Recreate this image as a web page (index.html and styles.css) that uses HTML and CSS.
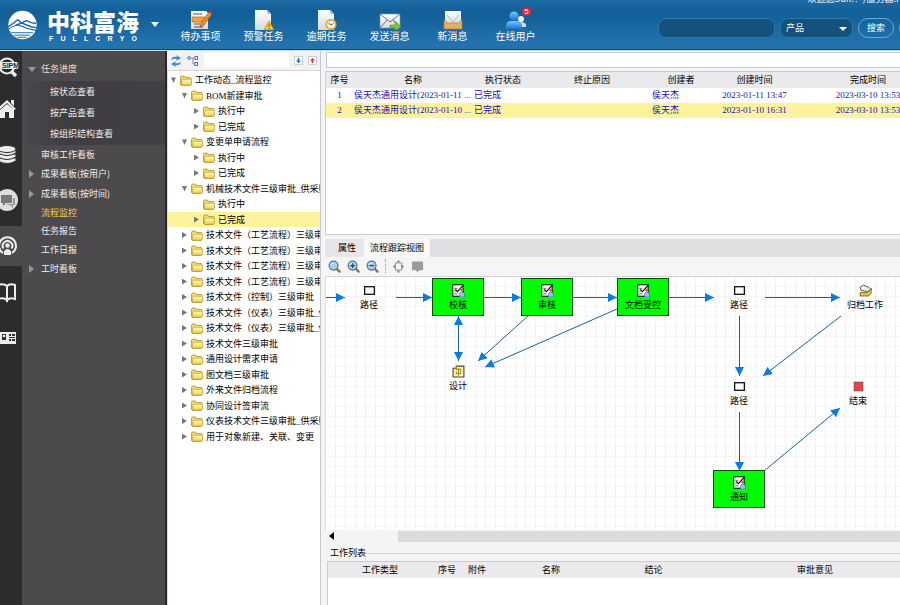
FILE: index.html
```html
<!DOCTYPE html>
<html lang="zh-CN">
<head>
<meta charset="utf-8">
<title>流程监控</title>
<link rel="stylesheet" href="styles.css">
</head>
<body>
<svg class="defs" aria-hidden="true">
  <defs>
    <linearGradient id="gold" x1="0" y1="0" x2="0" y2="1"><stop offset="0" stop-color="#fffbc4"/><stop offset="1" stop-color="#ecd04c"/></linearGradient>
    <linearGradient id="paper" x1="0" y1="0" x2="0" y2="1"><stop offset="0" stop-color="#ffffff"/><stop offset="1" stop-color="#d5dade"/></linearGradient>
    <linearGradient id="person" x1="0" y1="0" x2="0" y2="1"><stop offset="0" stop-color="#7cc6ff"/><stop offset="1" stop-color="#1274dd"/></linearGradient>
    <symbol id="folder" viewBox="0 0 12 11">
      <path d="M.5 9.500V2.500Q.5 1 2 1H4.500L5.500 2.500H10Q11 2.500 11 3.500V9Q11 10.500 9.500 10.500H1.500Z" fill="#f0da68" stroke="#a5851a" stroke-width=".7"/>
      <path d="M1.800 5.200Q2 4.300 2.900 4.300H11.500V9Q11.300 10.200 10.200 10.200H1.300Z" fill="url(#gold)" stroke="#b8962a" stroke-width=".6"/>
    </symbol>
    <symbol id="task" viewBox="0 0 12 12">
      <rect x=".7" y=".7" width="9.600" height="10.600" fill="#fff" stroke="#111"/>
      <path d="M2 4h3M2 6.500h2M2 9h3" stroke="#555" stroke-width=".8"/>
      <path d="M3 5l2 2 5-5.500" fill="none" stroke="#111" stroke-width="1.100"/>
      <circle cx="9" cy="5.500" r="1.400" fill="#e25a4b"/>
      <path d="M7 12V8.500Q9 6.500 11.500 8.500V12Z" fill="#9cc4f8" stroke="#3155a5" stroke-width=".5"/>
    </symbol>
    <symbol id="lens" viewBox="0 0 14 14">
      <path d="M9 9l3.500 3.500" stroke="#8d7334" stroke-width="2.400" stroke-linecap="round"/>
      <circle cx="6" cy="6" r="4.800" fill="#a9cfe8" stroke="#53748f" stroke-width="1.300"/>
      <path d="M3 5.500Q4 3 6.500 3" stroke="#e5f6ff" fill="none"/>
    </symbol>
  </defs>
</svg>

<header class="top">
  <a class="brand" href="#">
    <svg class="brand-mark" viewBox="0 0 30 30" aria-hidden="true">
      <circle cx="15" cy="15" r="14.700" fill="#fff"/>
      <path d="M0 17Q6 13 10 9.500Q13 13 19 15Q24 17 30 18M8 15Q13 14 19 10.500Q24 13 29 13.500" fill="none" stroke="#1c69a5" stroke-width="1.500"/>
      <path d="M1 19Q7 15 11 15Q19 19 29 20.500" fill="none" stroke="#1c69a5" stroke-width="1.200"/>
      <path d="M3 23h23M6 25.500h17M10 27.700h9" stroke="#1c69a5" stroke-width="1"/>
    </svg>
    <span class="brand-text">
      <strong>中科富海</strong>
      <span class="brand-latin"><span>F</span><span>U</span><span>L</span><span>L</span><span>C</span><span>R</span><span>Y</span><span>O</span></span>
    </span>
    <span class="caret"></span>
  </a>
  <nav class="shortcuts">
    <a href="#"><svg viewBox="0 0 22 20"><path d="M1 1h15l2 2v16H1z" fill="url(#paper)"/><path d="M3 4h9M4 14h6M4 17h9" stroke="#555" stroke-width="1.200"/><path d="M2 7h12l4 2-3 3H2z" fill="#f3a440" stroke="#b96e18" stroke-width=".7"/><path d="M11 13L19 2l3 2-8 11-4 2z" fill="#f08b25" stroke="#8b4a18" stroke-width=".6"/><path d="M19 2l1-1.500 3 2-1 2z" fill="#d9342b"/></svg><span>待办事项</span></a>
    <a href="#"><svg viewBox="0 0 22 20"><path d="M2 0h12l4 4v16H2z" fill="url(#paper)"/><path d="M14 0v4h4" fill="#bec5ca"/><path d="M16 11l5 9H11z" fill="#f7c82e" stroke="#c28b10" stroke-width=".8"/><path d="M16 14v3M16 18v1" stroke="#885b08"/></svg><span>预警任务</span></a>
    <a href="#"><svg viewBox="0 0 22 20"><path d="M2 0h12l4 4v16H2z" fill="url(#paper)"/><path d="M14 0v4h4" fill="#bec5ca"/><circle cx="15" cy="14.500" r="4.700" fill="#fff" stroke="#e7a12d" stroke-width="1.700"/><path d="M12.500 13l2.500 2 2.500-1.500" fill="none" stroke="#555"/></svg><span>逾期任务</span></a>
    <a href="#"><svg viewBox="0 0 22 20"><path d="M1 4h20v14H1z" fill="url(#paper)" stroke="#8b949b" stroke-width=".6"/><path d="M1 4l10 8L21 4M1 18l7-8M21 18l-7-8" fill="none" stroke="#697078"/><path d="M11 15h5v-4l6 5.500-6 5V18h-5z" fill="#7cc42b" stroke="#528e16" stroke-width=".5"/></svg><span>发送消息</span></a>
    <a href="#"><svg viewBox="0 0 22 20"><path d="M3 1h16v14H3z" fill="url(#paper)"/><path d="M5 5l6 7 6-7" fill="none" stroke="#a5b8c5"/><path d="M2 10l4 3h10l4-3v9H2z" fill="#e6ad65" stroke="#ba7a34" stroke-width=".7"/></svg><span>新消息</span></a>
    <a href="#"><svg viewBox="0 0 22 20"><circle cx="16" cy="9" r="3" fill="#eef4f8"/><path d="M12 17v-3q4-4 9 0v3z" fill="#d3dde5"/><circle cx="9" cy="6" r="4.600" fill="url(#person)"/><path d="M1 19v-4q1-4 5-4h6q4 0 5 4v4z" fill="url(#person)"/></svg><span>在线用户</span><b class="badge">5</b></a>
  </nav>
  <p class="welcome">欢迎您Sun!！/服务器:PLM</p>
  <form class="search">
    <input type="text" aria-label="关键字">
    <span class="picker"><select aria-label="类型"><option>产品</option></select></span>
    <button type="button">搜索</button>
    <button type="button" aria-label="高级搜索"></button>
  </form>
</header>

<main class="shell">
  <nav class="rail" aria-label="模块">
    <a href="#" class="first"><svg viewBox="0 0 20 22"><circle cx="7" cy="9" r="7.500" fill="none" stroke="#ececec" stroke-width="2"/><path d="M11 14l5 5" stroke="#ececec" stroke-width="3.500"/><rect x="0" y="5" width="19" height="7" rx="3" fill="#ececec"/><text x="2" y="11" class="rail-word">SIPM</text></svg></a>
    <a href="#"><svg viewBox="0 0 20 22"><path d="M-3 12L7 3l9 9-2 1-7-7-8 7zM11 3h3v6l-3-3zM0 13l7-6 7 6v8H9v-6H5v6H0z" fill="#ececec"/></svg></a>
    <a href="#"><svg viewBox="0 0 20 22"><g fill="#ececec" stroke="#2c2b2d" stroke-width="1"><path d="M-2 15v3q9 5 18 0v-3z"/><path d="M-2 11v3q9 5 18 0v-3z"/><path d="M-2 7v3q9 5 18 0V7z"/><ellipse cx="7" cy="6" rx="9" ry="3.500"/></g></svg></a>
    <a href="#"><svg viewBox="0 0 20 22"><circle cx="7" cy="11" r="11" fill="#dedede"/><path d="M1 6h11v8H6l-3 3v-3H1z" fill="#777"/><path d="M13 9h2v7h-2v3l-3-3H6l2-1h5z" fill="#999"/></svg></a>
    <a href="#" class="on"><svg viewBox="0 0 20 22"><g fill="none" stroke="#ececec" stroke-width="2"><path d="M3 18a8.500 8.500 0 1 1 9 0M3.500 13.500a4.800 4.800 0 1 1 8 0"/></g><circle cx="7.500" cy="10.500" r="2.300" fill="#ececec"/><path d="M4 20v-4q3.500-4 7 0v4z" fill="#ececec"/></svg></a>
    <a href="#"><svg viewBox="0 0 20 22"><path d="M-2 4q6-2 9 1v14q-3-3-9-1zM7 5q3-3 8-1v14q-5-2-8 1z" fill="none" stroke="#ececec" stroke-width="2"/></svg></a>
    <a href="#"><svg viewBox="0 0 20 22"><path d="M-2 5h18v12H-2z" fill="#ececec"/><path d="M2 7h4v6H2zM9 7h2v2H9zM12 7h3v2h-3zM9 10h6v1H9zM9 12h2v2H9zM12 12h3v2h-3zM0 15h5M8 15h6" fill="#2c2b2d"/><circle cx="4" cy="9" r="1.300" fill="#ececec"/></svg></a>
  </nav>

  <nav class="menu">
    <a href="#" class="parent open">任务进度</a>
    <div class="sub">
      <a href="#">按状态查看</a>
      <a href="#">按产品查看</a>
      <a href="#">按组织结构查看</a>
    </div>
    <a href="#">审核工作看板</a>
    <a href="#" class="parent">成果看板(按用户)</a>
    <a href="#" class="parent">成果看板(按时间)</a>
    <a href="#" class="minor current">流程监控</a>
    <a href="#" class="minor">任务报告</a>
    <a href="#">工作日报</a>
    <a href="#" class="parent">工时看板</a>
  </nav>

  <section class="tree-pane">
    <div class="tree-tools">
      <button type="button" aria-label="刷新"><svg viewBox="0 0 12 12"><path d="M1 5q1-4 6-3l-1-2 5 3-5 3 1-2q-3-1-6 1zM11 7q-1 4-6 3l1 2-5-3 5-3-1 2q3 1 6-1z" fill="#3f87cf"/></svg></button>
      <button type="button" aria-label="层级"><svg viewBox="0 0 12 12"><path d="M3 3h3M6 3v6h2M6 3h2" fill="none" stroke="#7d8db5"/><g fill="#fff" stroke="#5d6fa8"><circle cx="2" cy="3" r="1.400"/><rect x="8" y="1.500" width="2.500" height="3"/><rect x="8" y="7.500" width="2.500" height="3"/></g></svg></button>
      <input type="text" aria-label="筛选">
      <button type="button" class="step" aria-label="下一个"><svg viewBox="0 0 8 8"><path d="M3 1h2v3h2L4 7 1 4h2z" fill="#187f9c"/></svg></button>
      <button type="button" class="step" aria-label="上一个"><svg viewBox="0 0 8 8"><path d="M3 7h2V4h2L4 1 1 4h2z" fill="#d33d32"/></svg></button>
    </div>
    <ul class="tree">
      <li class="l0 open"><svg><use href="#folder"/></svg>工作动态_流程监控</li>
      <li class="l1 open"><svg><use href="#folder"/></svg>BOM新建审批</li>
      <li class="l2"><svg><use href="#folder"/></svg>执行中</li>
      <li class="l2"><svg><use href="#folder"/></svg>已完成</li>
      <li class="l1 open"><svg><use href="#folder"/></svg>变更单申请流程</li>
      <li class="l2"><svg><use href="#folder"/></svg>执行中</li>
      <li class="l2"><svg><use href="#folder"/></svg>已完成</li>
      <li class="l1 open"><svg><use href="#folder"/></svg>机械技术文件三级审批_供采购</li>
      <li class="l2 leaf"><svg><use href="#folder"/></svg>执行中</li>
      <li class="l2 picked"><svg><use href="#folder"/></svg>已完成</li>
      <li class="l1"><svg><use href="#folder"/></svg>技术文件（工艺流程）三级审批</li>
      <li class="l1"><svg><use href="#folder"/></svg>技术文件（工艺流程）三级审批</li>
      <li class="l1"><svg><use href="#folder"/></svg>技术文件（工艺流程）三级审批</li>
      <li class="l1"><svg><use href="#folder"/></svg>技术文件（工艺流程）三级审批</li>
      <li class="l1"><svg><use href="#folder"/></svg>技术文件（控制）三级审批</li>
      <li class="l1"><svg><use href="#folder"/></svg>技术文件（仪表）三级审批_供采购</li>
      <li class="l1"><svg><use href="#folder"/></svg>技术文件（仪表）三级审批_供采购</li>
      <li class="l1"><svg><use href="#folder"/></svg>技术文件三级审批</li>
      <li class="l1"><svg><use href="#folder"/></svg>通用设计需求申请</li>
      <li class="l1"><svg><use href="#folder"/></svg>图文档三级审批</li>
      <li class="l1"><svg><use href="#folder"/></svg>外来文件归档流程</li>
      <li class="l1"><svg><use href="#folder"/></svg>协同设计签审流</li>
      <li class="l1"><svg><use href="#folder"/></svg>仪表技术文件三级审批_供采购</li>
      <li class="l1"><svg><use href="#folder"/></svg>用于对象新建、关联、变更</li>
    </ul>
  </section>

  <section class="work">
    <div class="filter"><input type="text" aria-label="过滤"></div>
    <div class="list">
      <table class="flows">
        <colgroup><col class="w27"><col class="w120"><col class="w60"><col class="w118"><col class="w60"><col class="w87"><col class="w140"></colgroup>
        <thead><tr><th>序号</th><th>名称</th><th>执行状态</th><th>终止原因</th><th>创建者</th><th>创建时间</th><th>完成时间</th></tr></thead>
        <tbody>
          <tr><td class="mid">1</td><td>侯天杰通用设计(2023-01-11 ...</td><td>已完成</td><td></td><td>侯天杰</td><td class="mid">2023-01-11 13:47</td><td class="mid">2023-03-10 13:53</td></tr>
          <tr class="picked"><td class="mid">2</td><td>侯天杰通用设计(2023-01-10 ...</td><td>已完成</td><td></td><td>侯天杰</td><td class="mid">2023-01-10 16:31</td><td class="mid">2023-03-10 13:53</td></tr>
        </tbody>
      </table>
    </div>

    <div class="tabs"><button type="button">属性</button><button type="button" class="on">流程跟踪视图</button></div>
    <div class="tools">
      <button type="button" aria-label="缩放"><svg viewBox="0 0 14 14"><use href="#lens"/></svg></button>
      <button type="button" aria-label="放大"><svg viewBox="0 0 14 14"><use href="#lens"/><path d="M3.500 6h5M6 3.500v5" stroke="#234a77" stroke-width="1.400"/></svg></button>
      <button type="button" aria-label="缩小"><svg viewBox="0 0 14 14"><use href="#lens"/><path d="M3.500 6h5" stroke="#234a77" stroke-width="1.400"/></svg></button>
      <i class="split"></i>
      <button type="button" aria-label="适合窗口"><svg viewBox="0 0 14 14"><rect x="3.500" y="3" width="7" height="8" rx="1" fill="#fff6d8" stroke="#666f92"/><path d="M7 0l1.500 2h-3zM7 14l1.500-2h-3zM1 7l2-1.500v3zM13 7l-2-1.500v3z" fill="#5867a9"/></svg></button>
      <button type="button" aria-label="备注"><svg viewBox="0 0 14 14"><path d="M1 2.500q0-1 1-1h10q1 0 1 1V10q0 1-1 1H9l-2 2-2-2H2q-1 0-1-1z" fill="#9b9b9b"/></svg></button>
    </div>

    <div class="canvas">
      <svg class="links" width="576" height="252" aria-hidden="true">
        <defs><marker id="head" markerUnits="userSpaceOnUse" markerWidth="10" markerHeight="10" refX="9" refY="5" orient="auto-start-reverse"><path d="M0 .5L9 5 0 9.500z" fill="#0b7bdc"/></marker></defs>
        <g class="edge">
          <path d="M0 20.500H20"/><path d="M71 20.500H107"/><path d="M159 20.500H196"/><path d="M248 20.500H292"/><path d="M344 20.500H389"/><path d="M440 20.500H515"/>
          <path class="both" d="M133.500 39V84"/><path d="M203 39L153 84"/><path d="M292 32L160 90"/>
          <path d="M414.500 39V99"/><path d="M516 39L438 99"/><path d="M414.500 135V194"/><path d="M439 194L515 131"/>
        </g>
      </svg>
      <div class="node n1"><svg viewBox="0 0 12 12"><rect x="1.500" y="2.500" width="9" height="7" fill="#fff" stroke="#111" stroke-width="1.200"/></svg>路径</div>
      <div class="node go n2"><svg><use href="#task"/></svg>校核</div>
      <div class="node go n3"><svg><use href="#task"/></svg>审核</div>
      <div class="node go n4"><svg><use href="#task"/></svg>文档受控</div>
      <div class="node n5"><svg viewBox="0 0 12 12"><rect x="1.500" y="2.500" width="9" height="7" fill="#fff" stroke="#111" stroke-width="1.200"/></svg>路径</div>
      <div class="node n6"><svg viewBox="0 0 12 12"><path d="M1 8l7 0 4-4v3l-3 4H1z" fill="#ecd52f" stroke="#6c5c10" stroke-width=".8"/><path d="M1 3l3-2 5 2 2 2-3 2-6-1z" fill="#eee" stroke="#444" stroke-width=".8"/></svg>归档工作</div>
      <div class="node n7"><svg viewBox="0 0 12 12"><path d="M1 3h3V1h7v10H1z" fill="#fff3c4" stroke="#4b4533"/><path d="M4 1v3h4v4H4V6M6 3v7" fill="none" stroke="#b08a1d"/></svg>设计</div>
      <div class="node n8"><svg viewBox="0 0 12 12"><rect x="1.500" y="2.500" width="9" height="7" fill="#fff" stroke="#111" stroke-width="1.200"/></svg>路径</div>
      <div class="node n9"><svg viewBox="0 0 12 12"><rect x="2" y="2" width="8" height="8" fill="#e2454d" stroke="#9c3036" stroke-width=".8"/></svg>结束</div>
      <div class="node go n10"><svg><use href="#task"/></svg>通知</div>
    </div>
    <div class="hscroll"><i class="back"></i><i class="thumb"></i></div>

    <div class="jobs">
      <h2><span>工作列表</span></h2>
      <div class="jobs-body">
      <table>
        <colgroup><col class="w104"><col class="w30"><col class="w30"><col class="w118"><col class="w87"><col class="w236"></colgroup>
        <thead><tr><th>工作类型</th><th>序号</th><th>附件</th><th>名称</th><th>结论</th><th>审批意见</th></tr></thead>
      </table>
      </div>
    </div>
  </section>
</main>
</body>
</html>
```
FILE: styles.css
```css
* { box-sizing: border-box; }
html, body { height: 100%; }
body {
  margin: 0;
  display: flex;
  flex-direction: column;
  overflow: hidden;
  background: #fff;
  color: #000;
  font: 9px/16px "Liberation Serif", "Noto Sans CJK SC", serif;
}
a { color: inherit; text-decoration: none; }
button, input, select { font: inherit; color: inherit; margin: 0; padding: 0; border: 0; background: none; }
.defs { position: absolute; width: 0; height: 0; }

/* header */
.top {
  position: relative;
  flex: none;
  display: flex;
  align-items: center;
  height: 50px;
  overflow: hidden;
  color: #fff;
  background: linear-gradient(#1d6ba5, #125f97 25%, #2472ad 90%);
  border-bottom: 1px solid #0f4570;
  font-family: "Noto Sans CJK SC", sans-serif;
}
.brand { display: flex; align-items: center; flex: none; width: 169px; padding-left: 8px; }
.brand-mark { width: 29px; height: 30px; }
.brand-text { width: 92px; margin-left: 10px; }
.brand-text strong { display: block; font-size: 23px; line-height: 28px; font-weight: 900; white-space: nowrap; }
.brand-latin { display: flex; justify-content: space-between; padding: 0 2px; font: bold 7px/8px "Liberation Sans", sans-serif; }
.caret { margin-left: 12px; border: 4px solid transparent; border-top: 5px solid #fff; border-bottom: 0; }
.shortcuts { display: flex; flex: none; }
.shortcuts a {
  position: relative;
  display: flex;
  flex-direction: column;
  align-items: center;
  width: 63px;
  font-size: 10px;
  line-height: 12px;
  padding-top: 3px;
}
.shortcuts svg { width: 22px; height: 20px; }
.badge {
  position: absolute;
  top: 0;
  right: 16px;
  width: 9px;
  height: 9px;
  border-radius: 50%;
  background: #df2537;
  font: 8px/9px "Liberation Sans", sans-serif;
  text-align: center;
}
.welcome { position: absolute; right: -14px; top: -7px; margin: 0; font-size: 9px; line-height: 12px; white-space: nowrap; }
.search { display: flex; flex: none; gap: 5px; margin: 7px -35px 0 auto; font-size: 9px; }
.search input, .search select { height: 20px; background: #14517f; border: 1px solid #2c76aa; border-radius: 8px; }
.search input { width: 117px; }
.picker { position: relative; }
.picker select { appearance: none; width: 73px; padding-left: 5px; }
.picker::after { content: ""; position: absolute; right: 6px; top: 9px; border: 4px solid transparent; border-top: 4px solid #fff; border-bottom: 0; pointer-events: none; }
.search button { width: 36px; height: 20px; border: 1px solid #68a9d6; border-radius: 10px; }

.shell { flex: 1; min-height: 0; display: flex; border-top: 1px solid #cfe0e2; }

/* module rail */
.rail { flex: none; width: 22px; background: #2c2b2d; }
.rail a { display: flex; align-items: center; height: 40px; margin: 3px 0 6px; }
.rail .first { height: 34px; margin: 0 0 3px; }
.rail .on { background: #4b494c; }
.rail svg { width: 20px; height: 22px; }
.rail-word { font: bold 7px "Liberation Sans", sans-serif; fill: #2c2b2d; }

/* menu */
.menu {
  flex: none;
  width: 145px;
  padding-top: 8px;
  background: #4c4a4d;
  border-right: 2px solid #2b272b;
  color: #ededed;
  font-family: "Noto Sans CJK SC", sans-serif;
}
.menu a { display: block; position: relative; padding-left: 19px; line-height: 19px; }
.menu .parent { line-height: 20px; }
.menu .minor { line-height: 18px; }
.menu .parent::before { content: ""; position: absolute; left: 7px; top: 6px; border: 4px solid transparent; border-left: 5px solid #98979a; border-right: 0; }
.menu .parent.open::before { left: 6px; top: 8px; border: 4px solid transparent; border-top: 5px solid #98979a; border-bottom: 0; }
.menu .open { color: #f0dcc8; padding-bottom: 2px; }
.menu .current { color: #f4cf4e; }
.menu .sub { padding-bottom: 1px; background: linear-gradient(90deg, #4a484c, #3f3d41 30%, #414044); }
.menu .sub a { padding-left: 28px; line-height: 21px; }

/* tree */
.tree-pane { flex: none; display: flex; flex-direction: column; width: 154px; overflow: hidden; border-right: 1px solid #c8c8c8; }
.tree-tools { display: flex; align-items: center; gap: 5px; height: 19px; padding: 0 3px; background: #f2f2f4; }
.tree-tools svg { display: block; width: 12px; height: 12px; }
.tree-tools input { flex: 1; min-width: 0; height: 15px; background: #fff; }
.tree-tools .step { border: 1px solid #c9d3da; background: #fff; }
.tree-tools .step svg { width: 7px; height: 7px; }
.tree { flex: 1; margin: 0; padding: 1px 0 0; list-style: none; border-top: 1px solid #d5d5d5; border-left: 1px solid #ddd; }
.tree li { position: relative; display: flex; align-items: center; height: 16px; white-space: nowrap; }
.tree li:nth-child(even) { height: 15px; }
.tree svg { flex: none; width: 12px; height: 11px; margin-right: 3px; }
.tree li::before { content: ""; flex: none; width: 5px; height: 6px; margin-right: 4px; background: #777; clip-path: polygon(0 0, 100% 50%, 0 100%); }
.tree .open::before { clip-path: polygon(0 10%, 100% 10%, 50% 100%); }
.tree .leaf::before { visibility: hidden; }
.l0 { padding-left: 3px; }
.l1 { padding-left: 14px; }
.l2 { padding-left: 26px; }
.picked { background: #fcf39c; }

/* work area */
.work { flex: 1; min-width: 0; display: flex; flex-direction: column; padding-left: 4px; overflow: hidden; background: #f4f3f5; }
.filter { flex: none; height: 20px; padding: 1px 0 3px 1px; }
.filter input { display: block; width: 100%; height: 16px; background: #fff; border: 1px solid #b9cbd5; border-right: 0; }
.list { flex: 162 1 0; overflow: hidden; background: #fff; border: 1px solid #ccc; border-right: 0; }
table { table-layout: fixed; width: 0; border-collapse: collapse; }
th, td { height: 15px; padding: 0 1px; line-height: 15px; font-weight: normal; text-align: left; white-space: nowrap; overflow: hidden; }
th { height: 16px; background: #eae9eb; text-align: center; }
.flows td { color: #1414a8; }
.flows .mid { text-align: center; }
.w27 { width: 27px; }
.w30 { width: 30px; }
.w60 { width: 60px; }
.w87 { width: 87px; }
.w104 { width: 104px; }
.w118 { width: 118px; }
.w120 { width: 120px; }
.w140 { width: 140px; }
.w236 { width: 236px; }

.tabs { flex: none; display: flex; height: 18px; margin-top: 4px; background: #dfdee0; }
.tabs button { padding: 0 8px 0 13px; background: #e6e5e7; }
.tabs .on { padding: 0 6px; background: #f8f7f9; }
.tools { flex: none; display: flex; align-items: center; gap: 6px; height: 20px; padding-left: 3px; background: #f6f4f7; border-bottom: 1px solid #d5d3d8; }
.tools svg { display: block; width: 13px; height: 13px; }
.split { height: 14px; border-left: 1px dotted #999; }

.canvas {
  position: relative;
  flex: 254 1 0;
  overflow: hidden;
  background:
    repeating-linear-gradient(90deg, transparent 0 9px, #f3f1f3 9px 10px),
    repeating-linear-gradient(transparent 0 9px, #f7f5f7 9px 10px),
    #fff;
  border-left: 1px solid #ddd;
}
.links { position: absolute; left: -1px; top: 0; }
.edge path { fill: none; stroke: #14629f; stroke-width: 1; marker-end: url(#head); }
.edge .both { marker-start: url(#head); }
.node { position: absolute; display: flex; flex-direction: column; align-items: center; width: 52px; height: 38px; padding-top: 5px; line-height: 17px; white-space: nowrap; border: 1px solid transparent; }
.node svg { flex: none; width: 13px; height: 13px; }
.go { background: #00fc00; border-color: #124b12; }
.n1 { left: 17px; top: 1px; }
.n2 { left: 106px; top: 1px; }
.n3 { left: 195px; top: 1px; }
.n4 { left: 291px; top: 1px; }
.n5 { left: 387px; top: 1px; }
.n6 { left: 513px; top: 1px; }
.n7 { left: 106px; top: 82px; }
.n8 { left: 387px; top: 97px; }
.n9 { left: 506px; top: 97px; }
.n10 { left: 387px; top: 193px; }

.hscroll { flex: none; display: flex; align-items: center; height: 12px; background: #f4f3f5; }
.back { margin: 0 64px 0 4px; border: 4px solid transparent; border-right: 5px solid #000; border-left: 0; }
.thumb { flex: 1; height: 11px; background: #dbdadc; }

.jobs { flex: 60 1 0; display: flex; flex-direction: column; min-height: 0; padding: 3px 0 0 1px; }
.jobs h2 { display: flex; align-items: center; flex: none; margin: 0; padding-left: 4px; font-size: 9px; line-height: 16px; font-weight: normal; }
.jobs h2::after { content: ""; flex: 1; border-top: 1px solid #d2d1d4; }
.jobs-body { flex: 1; margin-left: 1px; overflow: hidden; background: #fff; border: 1px solid #ccc; border-right: 0; border-bottom: 0; }
```
